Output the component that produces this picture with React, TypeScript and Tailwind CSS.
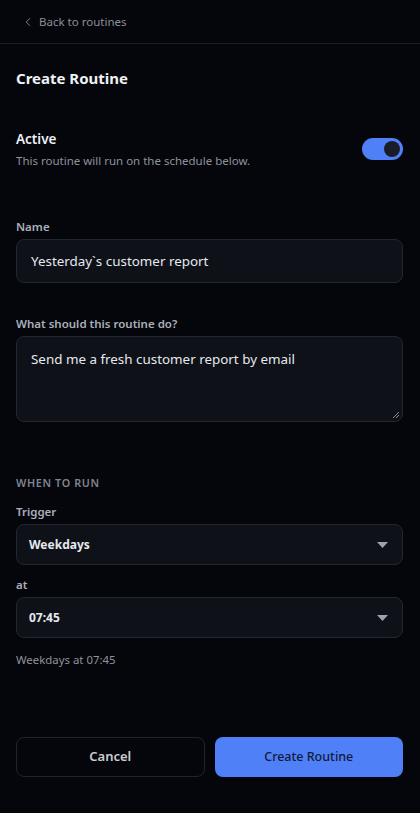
import { ChevronLeft } from "lucide-react";

const font = { fontFamily: '"Noto Sans", "Open Sans", sans-serif' };

const Label = ({ children }: { children: React.ReactNode }) => (
  <label className="block text-[11.5px] font-semibold text-[#aab0ba] leading-4 mb-[4px]">
    {children}
  </label>
);

const SelectBox = ({ value }: { value: string }) => (
  <div className="flex items-center justify-between h-[41px] rounded-lg border border-[#22262f] bg-[#0e1118] pl-[12px] pr-[14px]">
    <span className="text-[12px] font-bold text-[#e6e9ee]">{value}</span>
    <svg width="11" height="6" viewBox="0 0 11 6">
      <path d="M0 0h11L5.5 6z" fill="#9ca3af" />
    </svg>
  </div>
);

export default function App() {
  return (
    <div style={font} className="min-h-[813px] w-[420px] bg-[#05060b] text-white flex flex-col">
      <div className="h-[44px] flex items-center gap-[4px] pl-[21px] border-b border-[#1a1d25]">
        <ChevronLeft size={14} strokeWidth={1.5} className="text-[#8a909a]" />
        <span className="text-[11.5px] text-[#8a909a]">Back to routines</span>
      </div>

      <div className="pl-4 pr-[17px] flex flex-col flex-1">
        <h1 className="mt-[24px] text-[15px] font-bold text-[#eef1f5] leading-5">Create Routine</h1>

        <div className="mt-[41px] flex items-start justify-between">
          <div>
            <div className="text-[13.5px] font-semibold text-[#eef1f5] leading-5">Active</div>
            <div className="mt-[4px] text-[11.5px] text-[#8d939d] leading-4">
              This routine will run on the schedule below.
            </div>
          </div>
          <div className="mt-[9px] w-[41px] h-[22px] rounded-full bg-[#4f80f7] flex items-center justify-end pr-[3px]">
            <div className="w-[16px] h-[16px] rounded-full bg-[#1b1d26]" />
          </div>
        </div>

        <div className="mt-[50px]">
          <Label>Name</Label>
          <div className="h-[44px] flex items-center rounded-lg border border-[#22262f] bg-[#0e1118] px-[14px] text-[13.4px] text-[#e6e9ee]">
            Yesterday`s customer report
          </div>
        </div>

        <div className="mt-[33px]">
          <Label>What should this routine do?</Label>
          <div className="relative h-[86px] rounded-lg border border-[#22262f] bg-[#0e1118] px-[14px] pt-[12px] text-[13.4px] text-[#e6e9ee]">
            Send me a fresh customer report by email
            <svg className="absolute right-[2px] bottom-[2px]" width="8" height="8" viewBox="0 0 8 8">
              <path d="M7 1L1 7M7 4L4 7" stroke="#8a909a" strokeWidth="1" />
            </svg>
          </div>
        </div>

        <div className="mt-[53px] text-[10.8px] font-semibold tracking-[0.06em] text-[#7f8590] leading-4">
          WHEN TO RUN
        </div>

        <div className="mt-[13px]">
          <Label>Trigger</Label>
          <SelectBox value="Weekdays" />
        </div>

        <div className="mt-[12px]">
          <Label>at</Label>
          <SelectBox value="07:45" />
        </div>

        <div className="mt-[14px] text-[11.4px] text-[#8d939d] leading-4">Weekdays at 07:45</div>

        <div className="mt-[69px] grid grid-cols-2 gap-[10px]">
          <button className="h-[40px] rounded-lg border border-[#1f232b] bg-transparent text-[13px] font-semibold text-[#c9ccd2]">
            Cancel
          </button>
          <button className="h-[40px] rounded-lg bg-[#4f80f7] text-[12.5px] font-medium text-[#0f1a3a]">
            Create Routine
          </button>
        </div>
      </div>
    </div>
  );
}
